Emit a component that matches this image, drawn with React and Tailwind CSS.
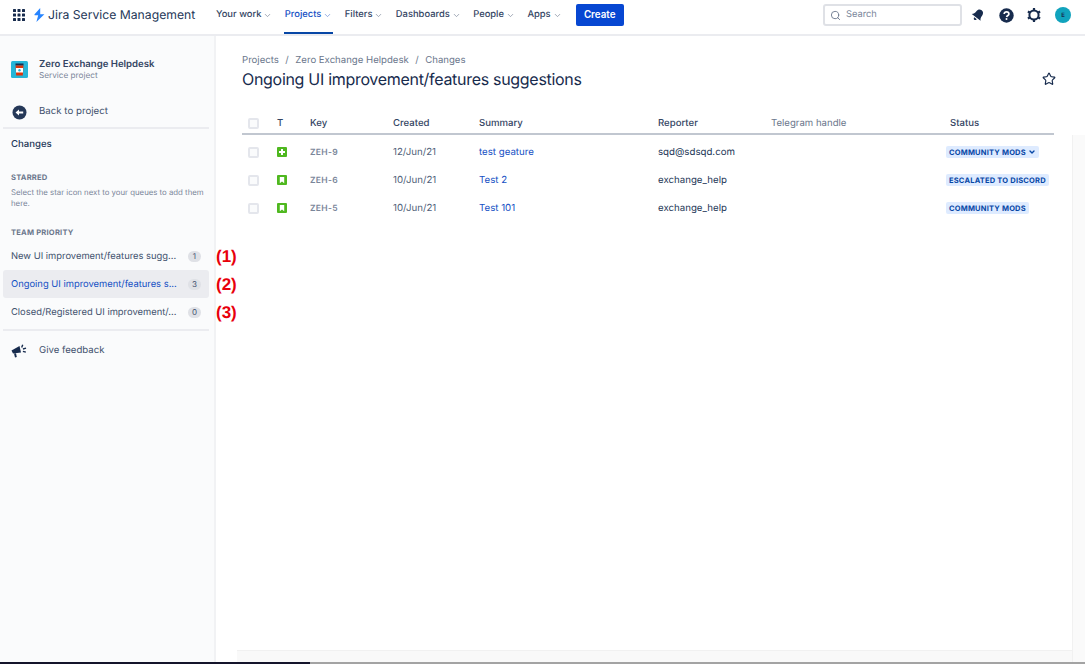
import React from "react";
import { ChevronDown, Search, Star } from "lucide-react";

const navItems = ["Your work", "Projects", "Filters", "Dashboards", "People", "Apps"];

const rows = [
  { key: "ZEH-9", type: "add", created: "12/Jun/21", summary: "test geature", reporter: "sqd@sdsqd.com", status: "COMMUNITY MODS", menu: true },
  { key: "ZEH-6", type: "story", created: "10/Jun/21", summary: "Test 2", reporter: "exchange_help", status: "ESCALATED TO DISCORD" },
  { key: "ZEH-5", type: "story", created: "10/Jun/21", summary: "Test 101", reporter: "exchange_help", status: "COMMUNITY MODS" },
];

const queues = [
  { name: "New UI improvement/features sugg...", count: 1, mark: "(1)" },
  { name: "Ongoing UI improvement/features s...", count: 3, mark: "(2)", active: true },
  { name: "Closed/Registered UI improvement/...", count: 0, mark: "(3)" },
];

const gridCols = "grid grid-cols-[35px_33px_83px_86px_179px_113px_179px_1fr] items-center";

const AppGrid = () => (
  <svg width="12" height="12" viewBox="0 0 12 12" fill="#172b4d">
    {[0, 4.5, 9].map((y) =>
      [0, 4.5, 9].map((x) => <rect key={`${x}-${y}`} x={x} y={y} width="3" height="3" rx="0.6" />)
    )}
  </svg>
);

const Bolt = () => (
  <svg width="11" height="14" viewBox="0 0 11 14">
    <path d="M6.2 0 L0.6 6.2 C0.2 6.7 0.5 7.3 1.1 7.3 L4.2 7.3 L2.4 14 L10.4 6.3 L6.2 6.3 Z" fill="#2684ff" />
  </svg>
);

const ProjectIcon = () => (
  <svg width="17" height="17" viewBox="0 0 17 17">
    <rect width="17" height="17" rx="1.5" fill="#26b5d8" />
    <rect x="4.5" y="2.5" width="8" height="2" fill="#172b4d" />
    <path d="M4.5 4.5 H12.5 L11.8 14.5 H5.2 Z" fill="#de350b" />
    <rect x="5" y="7" width="7" height="4.5" fill="#ffffff" />
    <circle cx="8.5" cy="9.2" r="1.2" fill="#26b5d8" />
  </svg>
);

const BackIcon = () => (
  <svg width="15" height="15" viewBox="0 0 15 15">
    <circle cx="7.5" cy="7.5" r="7" fill="#253858" />
    <path d="M3.5 7.5 L7 4.4 V6.4 H11.2 V8.6 H7 V10.6 Z" fill="#ffffff" />
  </svg>
);

const Megaphone = () => (
  <svg width="16" height="14" viewBox="0 0 16 14" fill="#172b4d">
    <path d="M0.5 6.5 L8.5 2 L10 8.5 L2 9.5 Z" />
    <path d="M3 9.5 L5 9.3 L5.8 13 L4 13.5 Z" />
    <rect x="10.5" y="0.5" width="1.4" height="3" transform="rotate(20 11 2)" />
    <rect x="12" y="4" width="3.2" height="1.4" transform="rotate(-15 13 5)" />
    <rect x="11.8" y="7" width="3" height="1.4" transform="rotate(15 13 8)" />
  </svg>
);

const Bell = () => (
  <svg width="14" height="14" viewBox="0 0 14 14" fill="#172b4d">
    <g transform="rotate(38 7 7)">
      <path d="M7 1 C9.4 1 10.6 2.8 10.6 5 C10.6 7.4 11.2 8.6 12.6 10 H1.4 C2.8 8.6 3.4 7.4 3.4 5 C3.4 2.8 4.6 1 7 1 Z" />
      <path d="M5.4 11 H8.6 C8.4 12.4 7.8 13 7 13 C6.2 13 5.6 12.4 5.4 11 Z" />
    </g>
  </svg>
);

const Help = () => (
  <svg width="15" height="15" viewBox="0 0 15 15">
    <circle cx="7.5" cy="7.5" r="7.2" fill="#172b4d" />
    <path d="M5.2 6 C5.2 4.6 6.2 3.8 7.5 3.8 C8.9 3.8 9.9 4.7 9.9 5.9 C9.9 7.4 8 7.5 7.6 9" fill="none" stroke="#ffffff" strokeWidth="1.7" />
    <circle cx="7.5" cy="11" r="1" fill="#ffffff" />
  </svg>
);

const Gear = () => (
  <svg width="14" height="14" viewBox="0 0 14 14" fill="none" stroke="#172b4d">
    <circle cx="7" cy="7" r="4.6" strokeWidth="2" />
    <g strokeWidth="2.2">
      <path d="M7 0 V2" />
      <path d="M7 12 V14" />
      <path d="M0.9 3.5 L2.7 4.5" />
      <path d="M11.3 9.5 L13.1 10.5" />
      <path d="M0.9 10.5 L2.7 9.5" />
      <path d="M11.3 4.5 L13.1 3.5" />
    </g>
  </svg>
);

const IssueType = ({ type }) => (
  <svg width="10" height="10" viewBox="0 0 10 10">
    <rect width="10" height="10" rx="1" fill="#4fb81f" />
    {type === "add" ? (
      <path d="M4 2 H6 V4 H8 V6 H6 V8 H4 V6 H2 V4 H4 Z" fill="#ffffff" />
    ) : (
      <path d="M2.8 2 H7.2 V8.2 L5 6.4 L2.8 8.2 Z" fill="#ffffff" />
    )}
  </svg>
);

const Checkbox = () => <div className="size-[11px] rounded-[2px] border-2 border-[#e4e6ec] bg-[#fafbfc]" />;

const TopBar = () => (
  <header className="flex h-[36px] shrink-0 items-center border-b-2 border-[#ebecf0] bg-white pb-[5px] pl-[13px] pt-[1px]">
    <AppGrid />
    <div className="ml-[9px] flex items-center">
      <Bolt />
    </div>
    <span className="ml-[3px] w-[167px] text-[12.2px] text-[#253858]">Jira Service Management</span>
    <nav className="flex h-[28px] items-center">
      {navItems.map((item) => (
        <div
          key={item}
          className={`relative mr-[10.4px] flex h-full items-center px-[1px] text-[9.4px] font-medium ${
            item === "Projects" ? "text-[#1550c4]" : "text-[#344563]"
          }`}
        >
          <span className="pt-[1px]">{item}</span>
          <ChevronDown size={9} className="ml-[2px] opacity-60" />
          {item === "Projects" && <div className="absolute inset-x-0 -bottom-[5px] h-[2px] bg-[#0747a6]" />}
        </div>
      ))}
    </nav>
    <button className="ml-[2.6px] h-[22px] w-[48px] rounded-[2px] bg-[#0747d2] text-[9.8px] font-semibold text-white">Create</button>
    <div className="ml-auto mr-[9px] flex h-[22px] w-[139px] items-center rounded-[3px] border-2 border-[#dfe1e6] bg-white pl-[5px]">
      <Search size={11} className="text-[#6b778c]" />
      <span className="ml-[5px] text-[9.3px] text-[#7a869a]">Search</span>
    </div>
    <div className="mr-[14px]"><Bell /></div>
    <div className="mr-[13px]"><Help /></div>
    <div className="mr-[14px]"><Gear /></div>
    <div className="mr-[14px] flex size-[16px] items-center justify-center rounded-full bg-[#11a3bd] text-[6px] font-semibold text-[#172b4d]">E</div>
  </header>
);

const Sidebar = () => (
  <aside className="flex w-[216px] shrink-0 flex-col border-r-2 border-[#f1f2f4] bg-[#fafbfc]">
    <div className="flex items-center pl-[11px] pt-[23px]">
      <ProjectIcon />
      <div className="ml-[11px]">
        <div className="text-[9.6px] leading-[11px] font-semibold text-[#344563]">Zero Exchange Helpdesk</div>
        <div className="text-[8.2px] leading-[10px] text-[#7a869a]">Service project</div>
      </div>
    </div>
    <div className="mt-[25px] flex items-center pl-[12px]">
      <BackIcon />
      <span className="ml-[12px] text-[9.7px] text-[#42526e]">Back to project</span>
    </div>
    <div className="mx-[3px] mt-[7px] h-[2px] w-[206px] bg-[#ebecf0]" />
    <div className="mt-[9px] pl-[11px] text-[9.6px] leading-[14px] font-medium text-[#253858]">Changes</div>
    <div className="mt-[21px] pl-[11px] text-[7.6px] leading-[10px] font-bold tracking-[0.2px] text-[#6b778c]">STARRED</div>
    <p className="mt-[4px] w-[208px] pl-[11px] text-[7.8px] leading-[11px] text-[#7a869a]">
      Select the star icon next to your queues to add them here.
    </p>
    <div className="mt-[19px] pl-[11px] text-[7.6px] leading-[10px] font-bold tracking-[0.2px] text-[#6b778c]">TEAM PRIORITY</div>
    <div className="mt-[4px] flex w-[206px] flex-col pl-[3px]">
      {queues.map((q) => (
        <div
          key={q.name}
          className={`relative flex h-[28px] w-[206px] items-center justify-between rounded-[3px] pl-[8px] pr-[8px] text-[9.4px] ${
            q.active ? "bg-[#ebecf0] text-[#1550c4]" : "text-[#42526e]"
          }`}
        >
          <span className="whitespace-nowrap pt-[2px]">{q.name}</span>
          <span className="flex h-[11px] w-[13px] items-center justify-center rounded-full bg-[#dfe1e6] text-[8px] text-[#42526e]">{q.count}</span>
          <span className="absolute left-[213px] top-[5px] font-['Liberation_Sans',sans-serif] text-[17px] leading-[20px] font-bold text-[#e8000b]">{q.mark}</span>
        </div>
      ))}
    </div>
    <div className="mx-[3px] mt-[3px] h-[2px] w-[206px] bg-[#ebecf0]" />
    <div className="mt-[13px] flex items-center pl-[11px]">
      <Megaphone />
      <span className="ml-[12px] text-[9.6px] text-[#42526e]">Give feedback</span>
    </div>
  </aside>
);

const IssueRow = ({ row }) => (
  <div className={`${gridCols} h-[28px] text-[9.7px] text-[#253858]`}>
    <div className="-mt-[2px] pl-[6px]"><Checkbox /></div>
    <div className="-mt-[2px]"><IssueType type={row.type} /></div>
    <div className="text-[8.5px] font-semibold tracking-[0.3px] text-[#7a869a]">{row.key}</div>
    <div className="text-[#505f79]">{row.created}</div>
    <div className="text-[#1550c4]">{row.summary}</div>
    <div className="col-span-2 text-[#253858]">{row.reporter}</div>
    <div className="-ml-[4px] whitespace-nowrap">
      <span className="inline-flex h-[12px] items-center rounded-[2px] bg-[#deebff] px-[3px] text-[7.5px] font-bold tracking-[0.2px] text-[#0747a6]">
        {row.status}
        {row.menu && <ChevronDown size={8} strokeWidth={4} className="ml-[2px]" />}
      </span>
    </div>
  </div>
);

const Content = () => (
  <main className="flex min-w-0 flex-1 flex-col bg-white">
    <div className="pl-[26px] pr-[31px]">
      <div className="mt-[18px] flex h-[14px] items-center text-[9.6px] text-[#6b778c]">
        <span>Projects</span>
        <span className="mx-[6.5px]">/</span>
        <span>Zero Exchange Helpdesk</span>
        <span className="mx-[6.5px]">/</span>
        <span>Changes</span>
      </div>
      <div className="flex h-[22px] items-center justify-between">
        <h1 className="text-[16px] font-normal tracking-[-0.3px] text-[#172b4d]">Ongoing UI improvement/features suggestions</h1>
        <Star size={14} strokeWidth={2} className="mr-[-2px] text-[#172b4d]" />
      </div>
      <div className={`${gridCols} mt-[23px] h-[22px] border-b-2 border-[#c1c7d0] pt-[2px] text-[9.6px] font-medium text-[#344563]`}>
        <div className="-mt-[2px] pl-[6px]"><Checkbox /></div>
        <div>T</div>
        <div>Key</div>
        <div>Created</div>
        <div>Summary</div>
        <div>Reporter</div>
        <div className="font-normal text-[#6b778c]">Telegram handle</div>
        <div>Status</div>
      </div>
    </div>
    <div className="flex min-h-0 flex-1">
      <div className="flex min-w-0 flex-1 flex-col">
        <div className="flex-1 pl-[26px] pr-[18px] pt-[4px]">
          <div className="w-[812px]">
            {rows.map((row) => (
              <IssueRow key={row.key} row={row} />
            ))}
          </div>
        </div>
        <div className="ml-[21px] h-[12px] border-t border-[#f1f1f1] bg-[#f9f9f9]" />
      </div>
      <div className="w-[13px] shrink-0 border-l border-[#f1f1f1] bg-[#fafafa]" />
    </div>
  </main>
);

export default function App() {
  return (
    <div className="flex h-[664px] w-[1085px] flex-col overflow-hidden bg-white font-['Inter','Liberation_Sans',sans-serif] [text-rendering:geometricPrecision]">
      <TopBar />
      <div className="flex min-h-0 flex-1">
        <Sidebar />
        <Content />
      </div>
      <div className="flex h-[2px] shrink-0">
        <div className="w-[310px] bg-[#14142b]" />
        <div className="flex-1 bg-[#a3a3a3]" />
      </div>
    </div>
  );
}
